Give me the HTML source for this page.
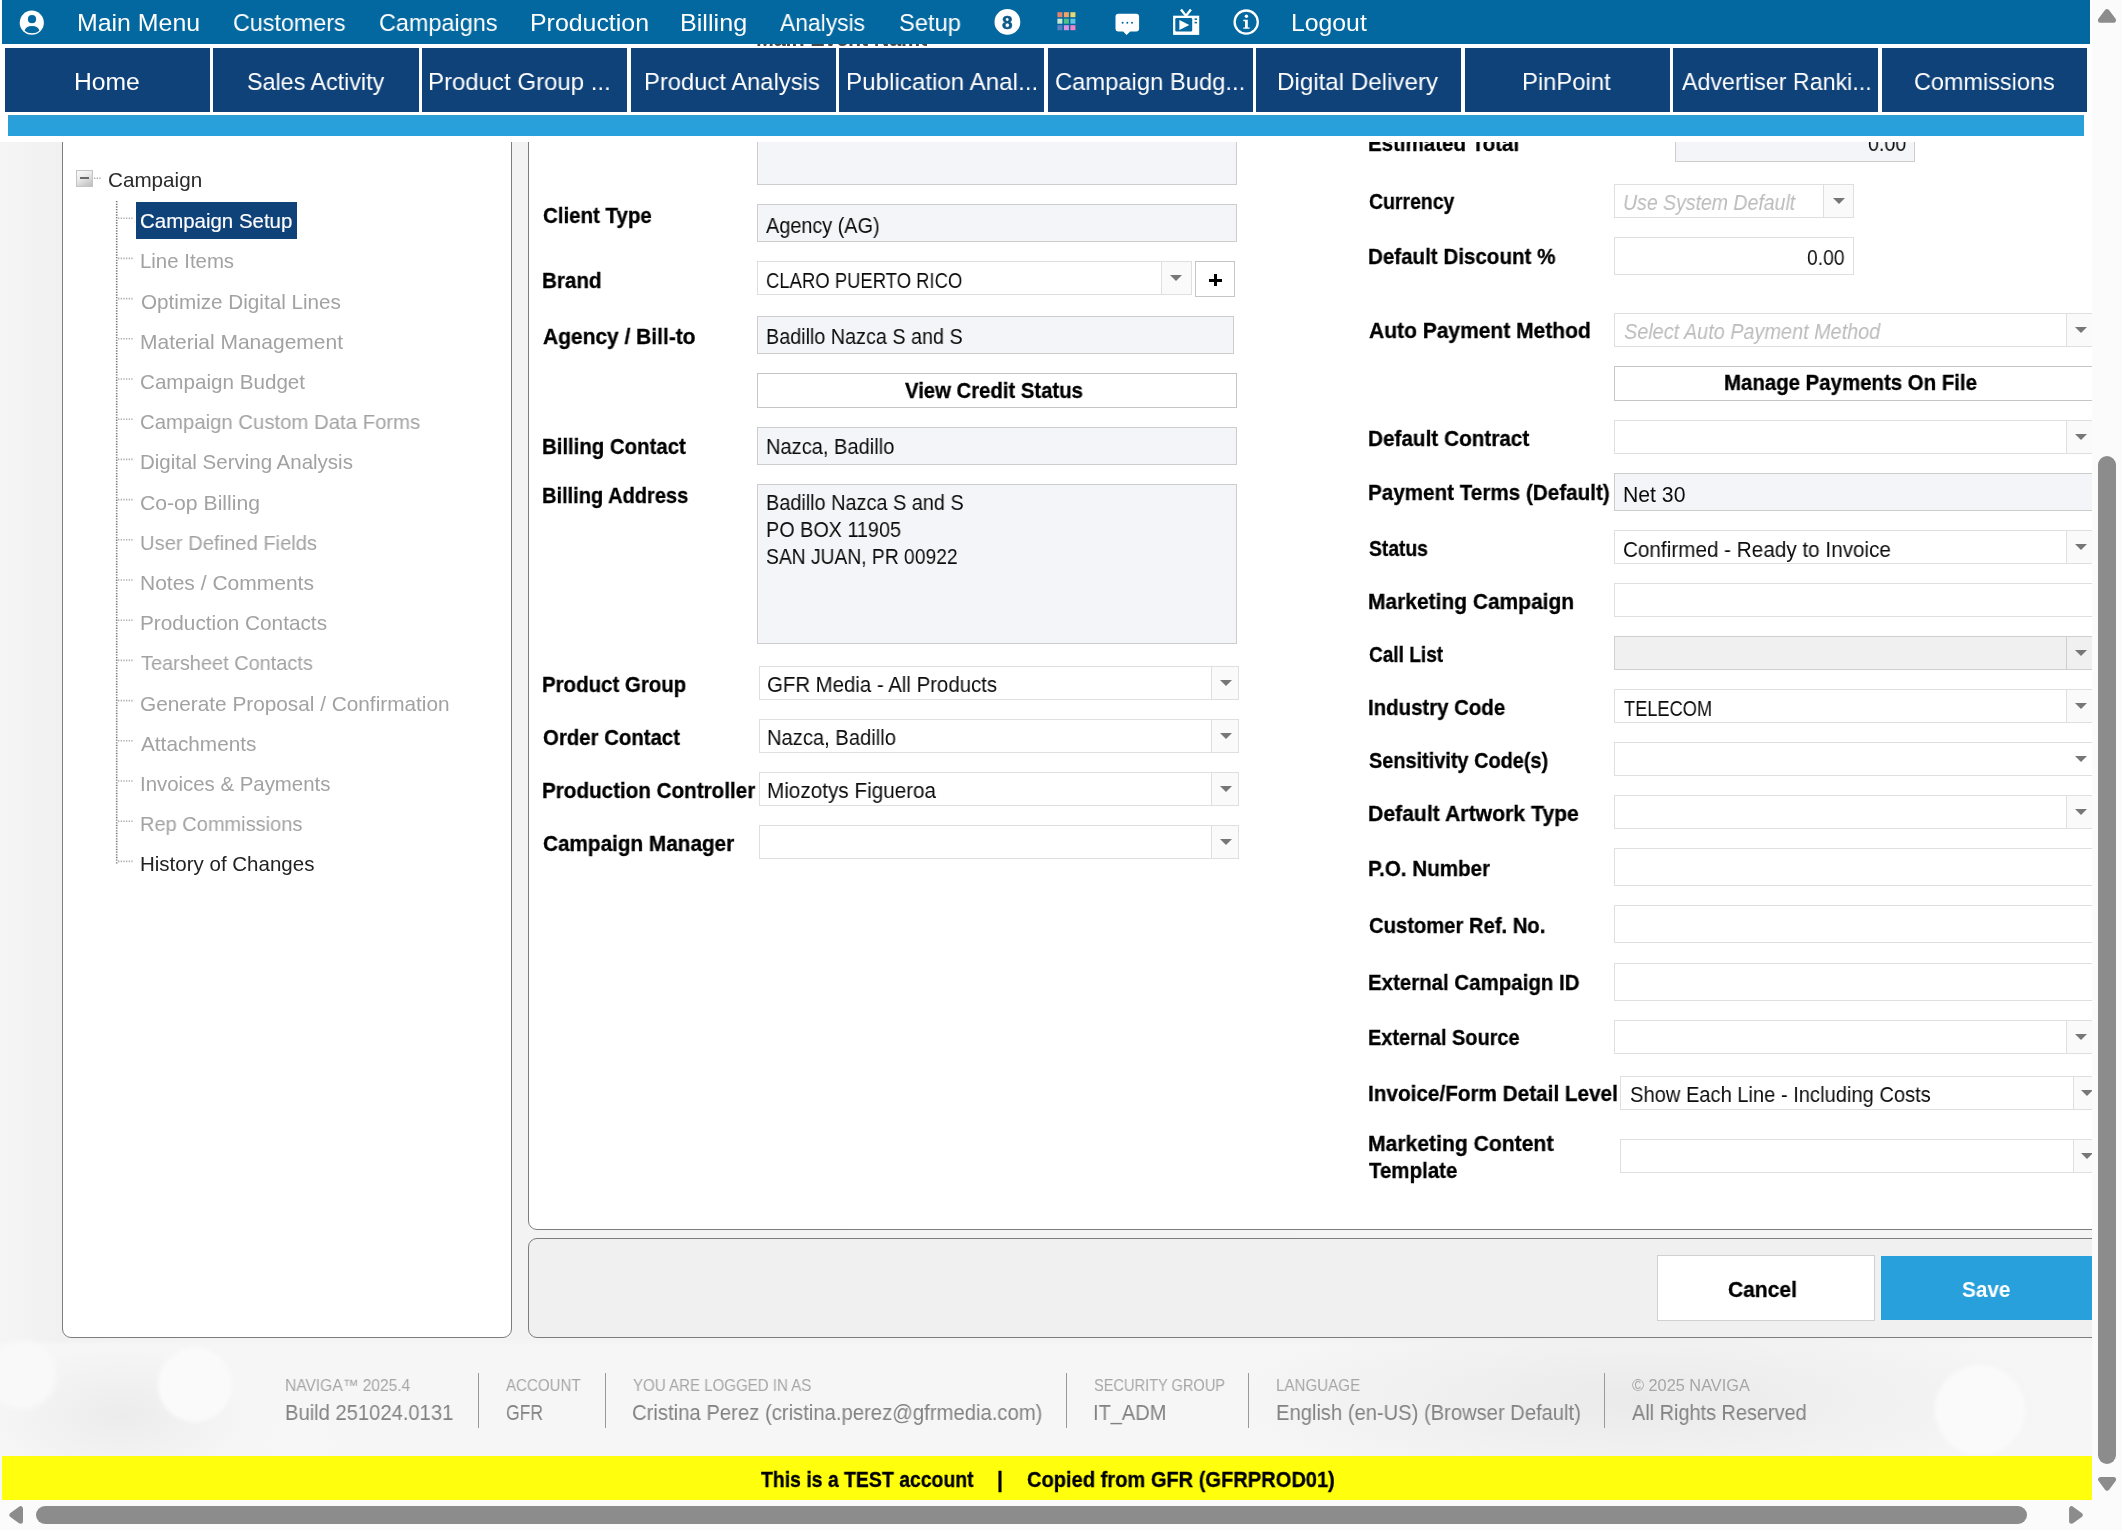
<!DOCTYPE html>
<html lang="en"><head><meta charset="utf-8"><title>Campaign Setup</title><style>
html,body{margin:0;padding:0}body{width:2122px;height:1530px;overflow:hidden;position:relative;background:#f3f3f3;font-family:"Liberation Sans", sans-serif}
.a{position:absolute;box-sizing:border-box}.t{position:absolute;white-space:nowrap;line-height:1;will-change:transform}
</style></head><body>
<div class="a" style="left:0;top:0;width:2122px;height:1530px;background:radial-gradient(circle at 195px 1385px,#fafafa 0 34px,rgba(250,250,250,0) 40px),radial-gradient(circle at 1980px 1410px,#fafafa 0 42px,rgba(250,250,250,0) 48px),radial-gradient(circle at 22px 1375px,#f9f9f9 0 30px,rgba(249,249,249,0) 38px),radial-gradient(circle at 300px 1445px,#f7f7f7 0 24px,rgba(247,247,247,0) 40px),radial-gradient(ellipse 130px 70px at 120px 1415px,#ececec 0,rgba(236,236,236,0) 100%),radial-gradient(ellipse 420px 95px at 1640px 1400px,#eaeaea 0,rgba(234,234,234,0) 100%),linear-gradient(180deg,rgba(246,246,246,0) 1340px,#f6f6f6 1345px),linear-gradient(90deg,#f5f5f5,#f1f1f1 60px,#f3f3f3 200px,#f4f4f4)"></div>
<div class="a" style="left:62px;top:100px;width:450px;height:1238px;background:#fff;border:1px solid #7d7d7d;border-radius:0 0 9px 9px;"></div>
<div class="a" style="left:528px;top:100px;width:1672px;height:1129.5px;background:#fff;border:1px solid #7d7d7d;border-radius:0 0 0 9px;"></div>
<div class="a" style="left:528px;top:1238px;width:1672px;height:99.5px;background:#f0f0f0;border:1px solid #7d7d7d;border-radius:9px 0 0 9px;"></div>
<div class="a" style="left:76px;top:170px;width:17px;height:17px;background:linear-gradient(150deg,#fafafa 0%,#ebebeb 40%,#cfcfcf 75%,#bdbdbd 100%);border:1px solid #c4c4c4;"></div>
<div class="a" style="left:80px;top:177px;width:9px;height:2px;background:#6a6a6a;"></div>
<div class="a" style="left:136px;top:202.2px;width:161px;height:36.5px;background:#10427a;"></div>
<svg class="a" style="left:0;top:0" width="520" height="900" viewBox="0 0 520 900"><line x1="116.7" y1="201" x2="116.7" y2="864" stroke="#7c7c7c" stroke-width="1.6" stroke-dasharray="1.333 1.333"/><line x1="94" y1="178.3" x2="101.5" y2="178.3" stroke="#aaa" stroke-width="1.6" stroke-dasharray="1.333 1.333"/><line x1="118" y1="218.2" x2="133" y2="218.2" stroke="#b0b0b0" stroke-width="1.6" stroke-dasharray="1.333 1.333"/><line x1="118" y1="258.4" x2="133" y2="258.4" stroke="#b0b0b0" stroke-width="1.6" stroke-dasharray="1.333 1.333"/><line x1="118" y1="298.6" x2="133" y2="298.6" stroke="#b0b0b0" stroke-width="1.6" stroke-dasharray="1.333 1.333"/><line x1="118" y1="338.8" x2="133" y2="338.8" stroke="#b0b0b0" stroke-width="1.6" stroke-dasharray="1.333 1.333"/><line x1="118" y1="379.0" x2="133" y2="379.0" stroke="#b0b0b0" stroke-width="1.6" stroke-dasharray="1.333 1.333"/><line x1="118" y1="419.2" x2="133" y2="419.2" stroke="#b0b0b0" stroke-width="1.6" stroke-dasharray="1.333 1.333"/><line x1="118" y1="459.4" x2="133" y2="459.4" stroke="#b0b0b0" stroke-width="1.6" stroke-dasharray="1.333 1.333"/><line x1="118" y1="499.6" x2="133" y2="499.6" stroke="#b0b0b0" stroke-width="1.6" stroke-dasharray="1.333 1.333"/><line x1="118" y1="539.8" x2="133" y2="539.8" stroke="#b0b0b0" stroke-width="1.6" stroke-dasharray="1.333 1.333"/><line x1="118" y1="580.0" x2="133" y2="580.0" stroke="#b0b0b0" stroke-width="1.6" stroke-dasharray="1.333 1.333"/><line x1="118" y1="620.2" x2="133" y2="620.2" stroke="#b0b0b0" stroke-width="1.6" stroke-dasharray="1.333 1.333"/><line x1="118" y1="660.4" x2="133" y2="660.4" stroke="#b0b0b0" stroke-width="1.6" stroke-dasharray="1.333 1.333"/><line x1="118" y1="700.6" x2="133" y2="700.6" stroke="#b0b0b0" stroke-width="1.6" stroke-dasharray="1.333 1.333"/><line x1="118" y1="740.8" x2="133" y2="740.8" stroke="#b0b0b0" stroke-width="1.6" stroke-dasharray="1.333 1.333"/><line x1="118" y1="781.0" x2="133" y2="781.0" stroke="#b0b0b0" stroke-width="1.6" stroke-dasharray="1.333 1.333"/><line x1="118" y1="821.2" x2="133" y2="821.2" stroke="#b0b0b0" stroke-width="1.6" stroke-dasharray="1.333 1.333"/><line x1="118" y1="861.4" x2="133" y2="861.4" stroke="#b0b0b0" stroke-width="1.6" stroke-dasharray="1.333 1.333"/></svg>
<div class="a" style="left:757px;top:100px;width:480px;height:85px;background:#f4f5f8;border:1px solid #cdcdcd;"></div>
<div class="a" style="left:757px;top:204px;width:480px;height:38px;background:#f4f5f8;border:1px solid #cdcdcd;"></div>
<div class="a" style="left:757px;top:261px;width:435px;height:34px;background:#fff;border:1px solid #dfdfdf;"></div>
<div class="a" style="left:1161px;top:261px;width:31px;height:34px;background:#fafafa;border:1px solid #dfdfdf;"></div>
<div class="a" style="left:1170.0px;top:274.9px;width:0;height:0;border-left:6.0px solid transparent;border-right:6.0px solid transparent;border-top:6.6px solid #777;"></div>
<div class="a" style="left:1195px;top:261px;width:40px;height:36px;background:#fff;border:1px solid #c6c6c6;"></div>
<div class="a" style="left:1209px;top:278.5px;width:12.5px;height:3.0px;background:#000;"></div>
<div class="a" style="left:1213.8px;top:273.8px;width:3.0px;height:12.5px;background:#000;"></div>
<div class="a" style="left:757px;top:316px;width:477px;height:38px;background:#f4f5f8;border:1px solid #cdcdcd;"></div>
<div class="a" style="left:757px;top:373px;width:480px;height:35px;background:#fff;border:1px solid #c6c6c6;"></div>
<div class="a" style="left:757px;top:427px;width:480px;height:38px;background:#f4f5f8;border:1px solid #cdcdcd;"></div>
<div class="a" style="left:757px;top:484px;width:480px;height:160px;background:#f4f5f8;border:1px solid #cdcdcd;"></div>
<div class="a" style="left:759px;top:666px;width:480px;height:34px;background:#fff;border:1px solid #dfdfdf;"></div>
<div class="a" style="left:1211px;top:666px;width:28px;height:34px;background:#fafafa;border:1px solid #dfdfdf;"></div>
<div class="a" style="left:1219.7px;top:679.8000000000001px;width:0;height:0;border-left:6.0px solid transparent;border-right:6.0px solid transparent;border-top:6.6px solid #777;"></div>
<div class="a" style="left:759px;top:719px;width:480px;height:34px;background:#fff;border:1px solid #dfdfdf;"></div>
<div class="a" style="left:1211px;top:719px;width:28px;height:34px;background:#fafafa;border:1px solid #dfdfdf;"></div>
<div class="a" style="left:1219.7px;top:732.8000000000001px;width:0;height:0;border-left:6.0px solid transparent;border-right:6.0px solid transparent;border-top:6.6px solid #777;"></div>
<div class="a" style="left:759px;top:772px;width:480px;height:34px;background:#fff;border:1px solid #dfdfdf;"></div>
<div class="a" style="left:1211px;top:772px;width:28px;height:34px;background:#fafafa;border:1px solid #dfdfdf;"></div>
<div class="a" style="left:1219.7px;top:785.8000000000001px;width:0;height:0;border-left:6.0px solid transparent;border-right:6.0px solid transparent;border-top:6.6px solid #777;"></div>
<div class="a" style="left:759px;top:825px;width:480px;height:34px;background:#fff;border:1px solid #dfdfdf;"></div>
<div class="a" style="left:1211px;top:825px;width:28px;height:34px;background:#fafafa;border:1px solid #dfdfdf;"></div>
<div class="a" style="left:1219.7px;top:838.8000000000001px;width:0;height:0;border-left:6.0px solid transparent;border-right:6.0px solid transparent;border-top:6.6px solid #777;"></div>
<div class="a" style="left:1675px;top:100px;width:240px;height:62px;background:#f4f5f8;border:1px solid #cdcdcd;"></div>
<div class="a" style="left:1614px;top:184px;width:240px;height:34px;background:#fff;border:1px solid #dfdfdf;"></div>
<div class="a" style="left:1823px;top:184px;width:31px;height:34px;background:#fafafa;border:1px solid #dfdfdf;"></div>
<div class="a" style="left:1833.2px;top:197.79999999999998px;width:0;height:0;border-left:6.0px solid transparent;border-right:6.0px solid transparent;border-top:6.6px solid #777;"></div>
<div class="a" style="left:1614px;top:237px;width:240px;height:38px;background:#fff;border:1px solid #dfdfdf;"></div>
<div class="a" style="left:1614px;top:313px;width:480px;height:34px;background:#fff;border:1px solid #dfdfdf;"></div>
<div class="a" style="left:2066px;top:313px;width:28px;height:34px;background:#fafafa;border:1px solid #dfdfdf;"></div>
<div class="a" style="left:2074.7px;top:326.8px;width:0;height:0;border-left:6.0px solid transparent;border-right:6.0px solid transparent;border-top:6.6px solid #777;"></div>
<div class="a" style="left:1614px;top:366px;width:480px;height:35px;background:#fff;border:1px solid #c6c6c6;"></div>
<div class="a" style="left:1614px;top:420px;width:480px;height:34px;background:#fff;border:1px solid #dfdfdf;"></div>
<div class="a" style="left:2066px;top:420px;width:28px;height:34px;background:#fafafa;border:1px solid #dfdfdf;"></div>
<div class="a" style="left:2074.7px;top:433.8px;width:0;height:0;border-left:6.0px solid transparent;border-right:6.0px solid transparent;border-top:6.6px solid #777;"></div>
<div class="a" style="left:1614px;top:473px;width:480px;height:38px;background:#f4f5f8;border:1px solid #cdcdcd;"></div>
<div class="a" style="left:1614px;top:530px;width:480px;height:34px;background:#fff;border:1px solid #dfdfdf;"></div>
<div class="a" style="left:2066px;top:530px;width:28px;height:34px;background:#fafafa;border:1px solid #dfdfdf;"></div>
<div class="a" style="left:2074.7px;top:543.8000000000001px;width:0;height:0;border-left:6.0px solid transparent;border-right:6.0px solid transparent;border-top:6.6px solid #777;"></div>
<div class="a" style="left:1614px;top:583px;width:480px;height:34px;background:#fff;border:1px solid #dfdfdf;"></div>
<div class="a" style="left:1614px;top:636px;width:480px;height:34px;background:#f0f0f0;border:1px solid #cfcfcf;"></div>
<div class="a" style="left:2066px;top:636px;width:28px;height:34px;background:#f0f0f0;border:1px solid #cfcfcf;"></div>
<div class="a" style="left:2074.7px;top:649.8000000000001px;width:0;height:0;border-left:6.0px solid transparent;border-right:6.0px solid transparent;border-top:6.6px solid #777;"></div>
<div class="a" style="left:1614px;top:689px;width:480px;height:34px;background:#fff;border:1px solid #dfdfdf;"></div>
<div class="a" style="left:2066px;top:689px;width:28px;height:34px;background:#fafafa;border:1px solid #dfdfdf;"></div>
<div class="a" style="left:2074.7px;top:702.8000000000001px;width:0;height:0;border-left:6.0px solid transparent;border-right:6.0px solid transparent;border-top:6.6px solid #777;"></div>
<div class="a" style="left:1614px;top:742px;width:480px;height:34px;background:#fff;border:1px solid #dfdfdf;"></div>
<div class="a" style="left:2074.7px;top:755.8000000000001px;width:0;height:0;border-left:6.0px solid transparent;border-right:6.0px solid transparent;border-top:6.6px solid #777;"></div>
<div class="a" style="left:1614px;top:795px;width:480px;height:34px;background:#fff;border:1px solid #dfdfdf;"></div>
<div class="a" style="left:2066px;top:795px;width:28px;height:34px;background:#fafafa;border:1px solid #dfdfdf;"></div>
<div class="a" style="left:2074.7px;top:808.8000000000001px;width:0;height:0;border-left:6.0px solid transparent;border-right:6.0px solid transparent;border-top:6.6px solid #777;"></div>
<div class="a" style="left:1614px;top:848px;width:480px;height:38px;background:#fff;border:1px solid #dfdfdf;"></div>
<div class="a" style="left:1614px;top:905px;width:480px;height:38px;background:#fff;border:1px solid #dfdfdf;"></div>
<div class="a" style="left:1614px;top:963px;width:480px;height:38px;background:#fff;border:1px solid #dfdfdf;"></div>
<div class="a" style="left:1614px;top:1020px;width:480px;height:34px;background:#fff;border:1px solid #dfdfdf;"></div>
<div class="a" style="left:2066px;top:1020px;width:28px;height:34px;background:#fafafa;border:1px solid #dfdfdf;"></div>
<div class="a" style="left:2074.7px;top:1033.8px;width:0;height:0;border-left:6.0px solid transparent;border-right:6.0px solid transparent;border-top:6.6px solid #777;"></div>
<div class="a" style="left:1620px;top:1076px;width:480px;height:34px;background:#fff;border:1px solid #dfdfdf;"></div>
<div class="a" style="left:2073px;top:1076px;width:27px;height:34px;background:#fafafa;border:1px solid #dfdfdf;"></div>
<div class="a" style="left:2081.2px;top:1089.8px;width:0;height:0;border-left:6.0px solid transparent;border-right:6.0px solid transparent;border-top:6.6px solid #777;"></div>
<div class="a" style="left:1620px;top:1139px;width:480px;height:34px;background:#fff;border:1px solid #dfdfdf;"></div>
<div class="a" style="left:2073px;top:1139px;width:27px;height:34px;background:#fafafa;border:1px solid #dfdfdf;"></div>
<div class="a" style="left:2081.2px;top:1152.8px;width:0;height:0;border-left:6.0px solid transparent;border-right:6.0px solid transparent;border-top:6.6px solid #777;"></div>
<div class="a" style="left:1657px;top:1255px;width:218px;height:66px;background:#fff;border:1px solid #d0d0d0;"></div>
<div class="a" style="left:1881px;top:1256px;width:319px;height:64px;background:#27a0db;"></div>
<div class="a" style="left:477.9px;top:1373px;width:1.2000000000000455px;height:54.5px;background:#9a9a9a;"></div>
<div class="a" style="left:604.8px;top:1373px;width:1.2000000000000455px;height:54.5px;background:#9a9a9a;"></div>
<div class="a" style="left:1065.6000000000001px;top:1373px;width:1.199999999999818px;height:54.5px;background:#9a9a9a;"></div>
<div class="a" style="left:1248.0px;top:1373px;width:1.199999999999818px;height:54.5px;background:#9a9a9a;"></div>
<div class="a" style="left:1603.7px;top:1373px;width:1.199999999999818px;height:54.5px;background:#9a9a9a;"></div>
<div class="a" style="left:0px;top:0px;width:2092px;height:142px;background:#fff;z-index:20;"></div>
<div class="a" style="left:2px;top:0px;width:2088px;height:44px;background:#03689f;z-index:20;"></div>
<div class="a" style="left:756px;top:44px;width:171px;height:2px;overflow:hidden;z-index:21;will-change:transform"><span style="position:absolute;left:0;top:-16px;font-weight:bold;font-size:21.6px;line-height:1;color:#4a4a4a;white-space:nowrap;letter-spacing:-0.2px">Main Event Name</span></div>
<div class="a" style="left:4.8px;top:48px;width:205.29999999999998px;height:63.7px;background:#10427a;z-index:20;"></div>
<div class="a" style="left:213.4px;top:48px;width:205.29999999999998px;height:63.7px;background:#10427a;z-index:20;"></div>
<div class="a" style="left:421.9px;top:48px;width:205.30000000000007px;height:63.7px;background:#10427a;z-index:20;"></div>
<div class="a" style="left:630.5px;top:48px;width:205.29999999999995px;height:63.7px;background:#10427a;z-index:20;"></div>
<div class="a" style="left:839.0px;top:48px;width:205.29999999999995px;height:63.7px;background:#10427a;z-index:20;"></div>
<div class="a" style="left:1047.5px;top:48px;width:205.29999999999995px;height:63.7px;background:#10427a;z-index:20;"></div>
<div class="a" style="left:1256.1px;top:48px;width:205.30000000000018px;height:63.7px;background:#10427a;z-index:20;"></div>
<div class="a" style="left:1464.7px;top:48px;width:205.29999999999995px;height:63.7px;background:#10427a;z-index:20;"></div>
<div class="a" style="left:1673.2px;top:48px;width:205.29999999999995px;height:63.7px;background:#10427a;z-index:20;"></div>
<div class="a" style="left:1881.8px;top:48px;width:205.29999999999995px;height:63.7px;background:#10427a;z-index:20;"></div>
<div class="a" style="left:8px;top:115px;width:2076px;height:21px;background:linear-gradient(180deg,#3a9cc8 0,#2aa0da 2px,#27a0db 100%);z-index:20;"></div>
<div class="a" style="left:2px;top:1456px;width:2090px;height:44px;background:#ffff0d;z-index:20;"></div>
<div class="a" style="left:2092px;top:0px;width:30px;height:1530px;background:#fbfbfb;z-index:22;"></div>
<div class="a" style="left:0px;top:1500px;width:2122px;height:30px;background:#fbfbfb;z-index:22;"></div>
<div class="a" style="left:2098px;top:456px;width:18px;height:1008px;background:#8c8c8c;border-radius:9px;z-index:23;"></div>
<div class="a" style="left:36px;top:1506px;width:1991px;height:18px;background:#8c8c8c;border-radius:9px;z-index:23;"></div>
<span class="t" id="t0" style="left:107.5px;top:170.0px;font-size:20.4px;color:#2a2a2a;transform:scaleX(1.0130);transform-origin:0 0;">Campaign</span>
<span class="t" id="t1" style="left:140.0px;top:211.0px;font-size:20.4px;color:#fff;-webkit-text-stroke:0.15px #fff;transform:scaleX(1.0029);transform-origin:0 0;">Campaign Setup</span>
<span class="t" id="t2" style="left:140.0px;top:251.0px;font-size:20.4px;color:#a2a2a2;transform:scaleX(0.9959);transform-origin:0 0;">Line Items</span>
<span class="t" id="t3" style="left:141.0px;top:292.0px;font-size:20.4px;color:#a2a2a2;transform:scaleX(1.0137);transform-origin:0 0;">Optimize Digital Lines</span>
<span class="t" id="t4" style="left:140.0px;top:332.0px;font-size:20.4px;color:#a2a2a2;transform:scaleX(1.0292);transform-origin:0 0;">Material Management</span>
<span class="t" id="t5" style="left:140.0px;top:372.0px;font-size:20.4px;color:#a2a2a2;transform:scaleX(1.0112);transform-origin:0 0;">Campaign Budget</span>
<span class="t" id="t6" style="left:140.0px;top:412.0px;font-size:20.4px;color:#a2a2a2;transform:scaleX(0.9974);transform-origin:0 0;">Campaign Custom Data Forms</span>
<span class="t" id="t7" style="left:140.0px;top:452.0px;font-size:20.4px;color:#a2a2a2;transform:scaleX(1.0045);transform-origin:0 0;">Digital Serving Analysis</span>
<span class="t" id="t8" style="left:140.0px;top:493.0px;font-size:20.4px;color:#a2a2a2;transform:scaleX(1.0379);transform-origin:0 0;">Co-op Billing</span>
<span class="t" id="t9" style="left:140.0px;top:533.0px;font-size:20.4px;color:#a2a2a2;transform:scaleX(0.9889);transform-origin:0 0;">User Defined Fields</span>
<span class="t" id="t10" style="left:140.0px;top:573.0px;font-size:20.4px;color:#a2a2a2;transform:scaleX(1.0301);transform-origin:0 0;">Notes / Comments</span>
<span class="t" id="t11" style="left:140.0px;top:613.0px;font-size:20.4px;color:#a2a2a2;transform:scaleX(1.0185);transform-origin:0 0;">Production Contacts</span>
<span class="t" id="t12" style="left:141.0px;top:653.0px;font-size:20.4px;color:#a2a2a2;transform:scaleX(0.9784);transform-origin:0 0;">Tearsheet Contacts</span>
<span class="t" id="t13" style="left:140.0px;top:694.0px;font-size:20.4px;color:#a2a2a2;transform:scaleX(1.0191);transform-origin:0 0;">Generate Proposal / Confirmation</span>
<span class="t" id="t14" style="left:141.0px;top:734.0px;font-size:20.4px;color:#a2a2a2;transform:scaleX(1.0181);transform-origin:0 0;">Attachments</span>
<span class="t" id="t15" style="left:140.0px;top:774.0px;font-size:20.4px;color:#a2a2a2;transform:scaleX(0.9999);transform-origin:0 0;">Invoices &amp; Payments</span>
<span class="t" id="t16" style="left:140.0px;top:814.0px;font-size:20.4px;color:#a2a2a2;transform:scaleX(0.9815);transform-origin:0 0;">Rep Commissions</span>
<span class="t" id="t17" style="left:140.0px;top:854.0px;font-size:20.4px;color:#222;transform:scaleX(1.0057);transform-origin:0 0;">History of Changes</span>
<span class="t" id="t18" style="left:543.3px;top:206.0px;font-size:21.4px;color:#000;font-weight:bold;-webkit-text-stroke:0.3px #000;transform:scaleX(0.9569);transform-origin:0 0;">Client Type</span>
<span class="t" id="t19" style="left:766.4px;top:215.0px;font-size:21.2px;color:#0c0c0c;transform:scaleX(0.9366);transform-origin:0 0;">Agency (AG)</span>
<span class="t" id="t20" style="left:542.3px;top:271.0px;font-size:21.4px;color:#000;font-weight:bold;-webkit-text-stroke:0.3px #000;transform:scaleX(0.9624);transform-origin:0 0;">Brand</span>
<span class="t" id="t21" style="left:765.5px;top:270.0px;font-size:21.2px;color:#0c0c0c;transform:scaleX(0.8714);transform-origin:0 0;">CLARO PUERTO RICO</span>
<span class="t" id="t22" style="left:543.3px;top:327.0px;font-size:21.4px;color:#000;font-weight:bold;-webkit-text-stroke:0.3px #000;transform:scaleX(0.9798);transform-origin:0 0;">Agency / Bill-to</span>
<span class="t" id="t23" style="left:766.1px;top:326.0px;font-size:21.2px;color:#0c0c0c;transform:scaleX(0.9328);transform-origin:0 0;">Badillo Nazca S and S</span>
<span class="t" id="t24" style="left:905.0px;top:381.0px;font-size:21.4px;color:#000;font-weight:bold;-webkit-text-stroke:0.3px #000;transform:scaleX(0.9492);transform-origin:0 0;">View Credit Status</span>
<span class="t" id="t25" style="left:542.3px;top:437.0px;font-size:21.4px;color:#000;font-weight:bold;-webkit-text-stroke:0.3px #000;transform:scaleX(0.9526);transform-origin:0 0;">Billing Contact</span>
<span class="t" id="t26" style="left:766.1px;top:436.0px;font-size:21.2px;color:#0c0c0c;transform:scaleX(0.9472);transform-origin:0 0;">Nazca, Badillo</span>
<span class="t" id="t27" style="left:542.4px;top:486.0px;font-size:21.4px;color:#000;font-weight:bold;-webkit-text-stroke:0.3px #000;transform:scaleX(0.9368);transform-origin:0 0;">Billing Address</span>
<span class="t" id="t28" style="left:765.5px;top:492.0px;font-size:21.2px;color:#0c0c0c;transform:scaleX(0.9375);transform-origin:0 0;">Badillo Nazca S and S</span>
<span class="t" id="t29" style="left:765.5px;top:519.0px;font-size:21.2px;color:#0c0c0c;transform:scaleX(0.9341);transform-origin:0 0;">PO BOX 11905</span>
<span class="t" id="t30" style="left:766.4px;top:546.0px;font-size:21.2px;color:#0c0c0c;transform:scaleX(0.9090);transform-origin:0 0;">SAN JUAN, PR 00922</span>
<span class="t" id="t31" style="left:542.3px;top:675.0px;font-size:21.4px;color:#000;font-weight:bold;-webkit-text-stroke:0.3px #000;transform:scaleX(0.9556);transform-origin:0 0;">Product Group</span>
<span class="t" id="t32" style="left:767.2px;top:674.0px;font-size:21.2px;color:#0c0c0c;transform:scaleX(0.9624);transform-origin:0 0;">GFR Media - All Products</span>
<span class="t" id="t33" style="left:543.3px;top:728.0px;font-size:21.4px;color:#000;font-weight:bold;-webkit-text-stroke:0.3px #000;transform:scaleX(0.9521);transform-origin:0 0;">Order Contact</span>
<span class="t" id="t34" style="left:767.2px;top:727.0px;font-size:21.2px;color:#0c0c0c;transform:scaleX(0.9517);transform-origin:0 0;">Nazca, Badillo</span>
<span class="t" id="t35" style="left:542.3px;top:781.0px;font-size:21.4px;color:#000;font-weight:bold;-webkit-text-stroke:0.3px #000;transform:scaleX(0.9649);transform-origin:0 0;">Production Controller</span>
<span class="t" id="t36" style="left:767.2px;top:780.0px;font-size:21.2px;color:#0c0c0c;transform:scaleX(0.9766);transform-origin:0 0;">Miozotys Figueroa</span>
<span class="t" id="t37" style="left:543.3px;top:834.0px;font-size:21.4px;color:#000;font-weight:bold;-webkit-text-stroke:0.3px #000;transform:scaleX(0.9691);transform-origin:0 0;">Campaign Manager</span>
<span class="t" id="t38" style="left:1367.8px;top:134.0px;font-size:21.4px;color:#000;font-weight:bold;-webkit-text-stroke:0.3px #000;transform:scaleX(0.9580);transform-origin:0 0;">Estimated Total</span>
<span class="t" id="t39" style="left:1867.5px;top:133.0px;font-size:21.2px;color:#0c0c0c;transform:scaleX(0.9267);transform-origin:0 0;">0.00</span>
<span class="t" id="t40" style="left:1368.8px;top:192.0px;font-size:21.4px;color:#000;font-weight:bold;-webkit-text-stroke:0.3px #000;transform:scaleX(0.9083);transform-origin:0 0;">Currency</span>
<span class="t" id="t41" style="left:1622.7px;top:192.0px;font-size:21.2px;color:#bcbcbc;font-style:italic;transform:scaleX(0.9197);transform-origin:0 0;">Use System Default</span>
<span class="t" id="t42" style="left:1367.8px;top:247.0px;font-size:21.4px;color:#000;font-weight:bold;-webkit-text-stroke:0.3px #000;transform:scaleX(0.9613);transform-origin:0 0;">Default Discount %</span>
<span class="t" id="t43" style="left:1807.3px;top:247.0px;font-size:21.2px;color:#0c0c0c;transform:scaleX(0.9094);transform-origin:0 0;">0.00</span>
<span class="t" id="t44" style="left:1368.8px;top:321.0px;font-size:21.4px;color:#000;font-weight:bold;-webkit-text-stroke:0.3px #000;transform:scaleX(0.9821);transform-origin:0 0;">Auto Payment Method</span>
<span class="t" id="t45" style="left:1623.6px;top:321.0px;font-size:21.2px;color:#bcbcbc;font-style:italic;transform:scaleX(0.9365);transform-origin:0 0;">Select Auto Payment Method</span>
<span class="t" id="t46" style="left:1723.7px;top:373.0px;font-size:21.4px;color:#000;font-weight:bold;-webkit-text-stroke:0.3px #000;transform:scaleX(0.9542);transform-origin:0 0;">Manage Payments On File</span>
<span class="t" id="t47" style="left:1367.8px;top:429.0px;font-size:21.4px;color:#000;font-weight:bold;-webkit-text-stroke:0.3px #000;transform:scaleX(0.9693);transform-origin:0 0;">Default Contract</span>
<span class="t" id="t48" style="left:1367.8px;top:483.0px;font-size:21.4px;color:#000;font-weight:bold;-webkit-text-stroke:0.3px #000;transform:scaleX(0.9651);transform-origin:0 0;">Payment Terms (Default)</span>
<span class="t" id="t49" style="left:1623.3px;top:484.0px;font-size:21.2px;color:#0c0c0c;transform:scaleX(0.9942);transform-origin:0 0;">Net 30</span>
<span class="t" id="t50" style="left:1368.8px;top:539.0px;font-size:21.4px;color:#000;font-weight:bold;-webkit-text-stroke:0.3px #000;transform:scaleX(0.8995);transform-origin:0 0;">Status</span>
<span class="t" id="t51" style="left:1622.6px;top:539.0px;font-size:21.2px;color:#0c0c0c;transform:scaleX(0.9765);transform-origin:0 0;">Confirmed - Ready to Invoice</span>
<span class="t" id="t52" style="left:1367.8px;top:592.0px;font-size:21.4px;color:#000;font-weight:bold;-webkit-text-stroke:0.3px #000;transform:scaleX(0.9797);transform-origin:0 0;">Marketing Campaign</span>
<span class="t" id="t53" style="left:1368.8px;top:645.0px;font-size:21.4px;color:#000;font-weight:bold;-webkit-text-stroke:0.3px #000;transform:scaleX(0.8907);transform-origin:0 0;">Call List</span>
<span class="t" id="t54" style="left:1367.8px;top:698.0px;font-size:21.4px;color:#000;font-weight:bold;-webkit-text-stroke:0.3px #000;transform:scaleX(0.9537);transform-origin:0 0;">Industry Code</span>
<span class="t" id="t55" style="left:1624.0px;top:698.0px;font-size:21.2px;color:#0c0c0c;transform:scaleX(0.8604);transform-origin:0 0;">TELECOM</span>
<span class="t" id="t56" style="left:1368.8px;top:751.0px;font-size:21.4px;color:#000;font-weight:bold;-webkit-text-stroke:0.3px #000;transform:scaleX(0.9302);transform-origin:0 0;">Sensitivity Code(s)</span>
<span class="t" id="t57" style="left:1367.8px;top:804.0px;font-size:21.4px;color:#000;font-weight:bold;-webkit-text-stroke:0.3px #000;transform:scaleX(0.9913);transform-origin:0 0;">Default Artwork Type</span>
<span class="t" id="t58" style="left:1367.8px;top:859.0px;font-size:21.4px;color:#000;font-weight:bold;-webkit-text-stroke:0.3px #000;transform:scaleX(0.9628);transform-origin:0 0;">P.O. Number</span>
<span class="t" id="t59" style="left:1368.8px;top:916.0px;font-size:21.4px;color:#000;font-weight:bold;-webkit-text-stroke:0.3px #000;transform:scaleX(0.9448);transform-origin:0 0;">Customer Ref. No.</span>
<span class="t" id="t60" style="left:1367.8px;top:973.0px;font-size:21.4px;color:#000;font-weight:bold;-webkit-text-stroke:0.3px #000;transform:scaleX(0.9561);transform-origin:0 0;">External Campaign ID</span>
<span class="t" id="t61" style="left:1367.9px;top:1028.0px;font-size:21.4px;color:#000;font-weight:bold;-webkit-text-stroke:0.3px #000;transform:scaleX(0.9304);transform-origin:0 0;">External Source</span>
<span class="t" id="t62" style="left:1367.8px;top:1084.0px;font-size:21.4px;color:#000;font-weight:bold;-webkit-text-stroke:0.3px #000;transform:scaleX(0.9687);transform-origin:0 0;">Invoice/Form Detail Level</span>
<span class="t" id="t63" style="left:1630.2px;top:1084.0px;font-size:21.2px;color:#0c0c0c;transform:scaleX(0.9493);transform-origin:0 0;">Show Each Line - Including Costs</span>
<span class="t" id="t64" style="left:1367.8px;top:1134.0px;font-size:21.4px;color:#000;font-weight:bold;-webkit-text-stroke:0.3px #000;transform:scaleX(0.9869);transform-origin:0 0;">Marketing Content</span>
<span class="t" id="t65" style="left:1368.8px;top:1161.0px;font-size:21.4px;color:#000;font-weight:bold;-webkit-text-stroke:0.3px #000;transform:scaleX(0.9564);transform-origin:0 0;">Template</span>
<span class="t" id="t66" style="left:1728.0px;top:1279.0px;font-size:21.6px;color:#000;font-weight:bold;-webkit-text-stroke:0.3px #000;transform:scaleX(0.9740);transform-origin:0 0;">Cancel</span>
<span class="t" id="t67" style="left:1961.7px;top:1279.0px;font-size:21.6px;color:#fff;font-weight:bold;transform:scaleX(0.9578);transform-origin:0 0;">Save</span>
<span class="t" id="t68" style="left:284.7px;top:1377.0px;font-size:16.2px;color:#a6a6a6;transform:scaleX(0.9615);transform-origin:0 0;">NAVIGA™ 2025.4</span>
<span class="t" id="t69" style="left:284.7px;top:1402.0px;font-size:21.2px;color:#828282;transform:scaleX(0.9523);transform-origin:0 0;">Build 251024.0131</span>
<span class="t" id="t70" style="left:506.3px;top:1377.0px;font-size:16.2px;color:#a6a6a6;transform:scaleX(0.9319);transform-origin:0 0;">ACCOUNT</span>
<span class="t" id="t71" style="left:505.5px;top:1402.0px;font-size:21.2px;color:#828282;transform:scaleX(0.8266);transform-origin:0 0;">GFR</span>
<span class="t" id="t72" style="left:633.0px;top:1377.0px;font-size:16.2px;color:#a6a6a6;transform:scaleX(0.9306);transform-origin:0 0;">YOU ARE LOGGED IN AS</span>
<span class="t" id="t73" style="left:632.0px;top:1402.0px;font-size:21.2px;color:#828282;transform:scaleX(0.9568);transform-origin:0 0;">Cristina Perez (cristina.perez@gfrmedia.com)</span>
<span class="t" id="t74" style="left:1093.9px;top:1377.0px;font-size:16.2px;color:#a6a6a6;transform:scaleX(0.9010);transform-origin:0 0;">SECURITY GROUP</span>
<span class="t" id="t75" style="left:1093.0px;top:1402.0px;font-size:21.2px;color:#828282;transform:scaleX(0.9447);transform-origin:0 0;">IT_ADM</span>
<span class="t" id="t76" style="left:1275.8px;top:1377.0px;font-size:16.2px;color:#a6a6a6;transform:scaleX(0.9353);transform-origin:0 0;">LANGUAGE</span>
<span class="t" id="t77" style="left:1275.7px;top:1402.0px;font-size:21.2px;color:#828282;transform:scaleX(0.9519);transform-origin:0 0;">English (en-US) (Browser Default)</span>
<span class="t" id="t78" style="left:1632.2px;top:1377.0px;font-size:16.2px;color:#a6a6a6;transform:scaleX(1.0076);transform-origin:0 0;">© 2025 NAVIGA</span>
<span class="t" id="t79" style="left:1632.2px;top:1402.0px;font-size:21.2px;color:#828282;transform:scaleX(0.9386);transform-origin:0 0;">All Rights Reserved</span>
<span class="t" id="t80" style="left:77.0px;top:11.0px;font-size:24.3px;color:#fff;transform:scaleX(1.0241);transform-origin:0 0;z-index:21;">Main Menu</span>
<span class="t" id="t81" style="left:232.5px;top:11.0px;font-size:24.3px;color:#fff;transform:scaleX(0.9586);transform-origin:0 0;z-index:21;">Customers</span>
<span class="t" id="t82" style="left:378.6px;top:11.0px;font-size:24.3px;color:#fff;transform:scaleX(0.9642);transform-origin:0 0;z-index:21;">Campaigns</span>
<span class="t" id="t83" style="left:530.0px;top:11.0px;font-size:24.3px;color:#fff;transform:scaleX(1.0243);transform-origin:0 0;z-index:21;">Production</span>
<span class="t" id="t84" style="left:680.2px;top:11.0px;font-size:24.3px;color:#fff;transform:scaleX(1.0356);transform-origin:0 0;z-index:21;">Billing</span>
<span class="t" id="t85" style="left:780.2px;top:11.0px;font-size:24.3px;color:#fff;transform:scaleX(0.9398);transform-origin:0 0;z-index:21;">Analysis</span>
<span class="t" id="t86" style="left:898.6px;top:11.0px;font-size:24.3px;color:#fff;transform:scaleX(0.9744);transform-origin:0 0;z-index:21;">Setup</span>
<span class="t" id="t87" style="left:1291.0px;top:11.0px;font-size:24.3px;color:#fff;transform:scaleX(1.0196);transform-origin:0 0;z-index:21;">Logout</span>
<span class="t" id="t88" style="left:73.7px;top:70.0px;font-size:24.3px;color:#fff;transform:scaleX(1.0161);transform-origin:0 0;z-index:21;">Home</span>
<span class="t" id="t89" style="left:246.5px;top:70.0px;font-size:24.3px;color:#fff;transform:scaleX(0.9588);transform-origin:0 0;z-index:21;">Sales Activity</span>
<span class="t" id="t90" style="left:428.0px;top:70.0px;font-size:24.3px;color:#fff;transform:scaleX(0.9875);transform-origin:0 0;z-index:21;">Product Group ...</span>
<span class="t" id="t91" style="left:644.0px;top:70.0px;font-size:24.3px;color:#fff;transform:scaleX(0.9787);transform-origin:0 0;z-index:21;">Product Analysis</span>
<span class="t" id="t92" style="left:845.6px;top:70.0px;font-size:24.3px;color:#fff;transform:scaleX(0.9947);transform-origin:0 0;z-index:21;">Publication Anal...</span>
<span class="t" id="t93" style="left:1054.5px;top:70.0px;font-size:24.3px;color:#fff;transform:scaleX(0.9778);transform-origin:0 0;z-index:21;">Campaign Budg...</span>
<span class="t" id="t94" style="left:1277.0px;top:70.0px;font-size:24.3px;color:#fff;transform:scaleX(0.9945);transform-origin:0 0;z-index:21;">Digital Delivery</span>
<span class="t" id="t95" style="left:1522.0px;top:70.0px;font-size:24.3px;color:#fff;transform:scaleX(0.9803);transform-origin:0 0;z-index:21;">PinPoint</span>
<span class="t" id="t96" style="left:1682.0px;top:70.0px;font-size:24.3px;color:#fff;transform:scaleX(0.9555);transform-origin:0 0;z-index:21;">Advertiser Ranki...</span>
<span class="t" id="t97" style="left:1914.0px;top:70.0px;font-size:24.3px;color:#fff;transform:scaleX(0.9643);transform-origin:0 0;z-index:21;">Commissions</span>
<span class="t" id="t98" style="left:761.0px;top:1470.0px;font-size:21.4px;color:#000;font-weight:bold;-webkit-text-stroke:0.3px #000;transform:scaleX(0.9079);transform-origin:0 0;z-index:21;">This is a TEST account</span>
<span class="t" id="t99" style="left:996.5px;top:1470.0px;font-size:21.4px;color:#000;font-weight:bold;-webkit-text-stroke:0.3px #000;z-index:21;">|</span>
<span class="t" id="t100" style="left:1026.6px;top:1470.0px;font-size:21.4px;color:#000;font-weight:bold;-webkit-text-stroke:0.3px #000;transform:scaleX(0.9385);transform-origin:0 0;z-index:21;">Copied from GFR (GFRPROD01)</span>
<svg class="a" style="left:0;top:0;z-index:30" width="1300" height="48" viewBox="0 0 1300 48">
<!-- user -->
<circle cx="31.8" cy="22.7" r="12.1" fill="#fff"/>
<circle cx="32" cy="19.2" r="4.1" fill="#03689f"/>
<path d="M24.6 30.8 Q25.6 26 32 26 Q38.4 26 39.4 30.8 Q36.4 33.3 32 33.3 Q27.6 33.3 24.6 30.8Z" fill="#03689f"/>
<!-- 8 -->
<circle cx="1007.4" cy="21.9" r="12.9" fill="#fff"/>
<text x="1007.4" y="28.6" text-anchor="middle" font-family="Liberation Sans, sans-serif" font-weight="bold" font-size="19" fill="#0b5a8a" stroke="#0b5a8a" stroke-width="0.5" style="font-weight:bold">8</text>
<!-- grid -->
<g>
<rect x="1057.4" y="12.2" width="5" height="5" fill="#e5826c"/><rect x="1063.9" y="12.2" width="5" height="5" fill="#efa465"/><rect x="1070.4" y="12.2" width="5" height="5" fill="#e6d873"/>
<rect x="1057.4" y="18.7" width="5" height="5" fill="#c9e9cf"/><rect x="1063.9" y="18.7" width="5" height="5" fill="#4fc088"/><rect x="1070.4" y="18.7" width="5" height="5" fill="#5fc3e4"/>
<rect x="1057.4" y="25.2" width="5" height="5" fill="#5b80c4"/><rect x="1063.9" y="25.2" width="5" height="5" fill="#dc93e2"/><rect x="1070.4" y="25.2" width="5" height="5" fill="#f083c4"/>
</g>
<!-- chat -->
<path d="M1118.4 13.8 H1136.2 Q1139.1 13.8 1139.1 16.7 V28.5 Q1139.1 31.4 1136.2 31.4 H1130.2 L1126.6 35 L1123.2 31.4 H1118.4 Q1115.5 31.4 1115.5 28.5 V16.7 Q1115.5 13.8 1118.4 13.8Z" fill="#fff"/>
<circle cx="1122.6" cy="22.8" r="1" fill="#03689f"/><circle cx="1127.3" cy="22.8" r="1" fill="#03689f"/><circle cx="1132" cy="22.8" r="1" fill="#03689f"/>
<!-- tv -->
<path d="M1181 9.6 L1186 15.9 L1190.9 9.6" stroke="#fff" stroke-width="2.4" fill="none"/>
<rect x="1173.1" y="15.7" width="26.1" height="19.2" fill="#fff"/>
<rect x="1175.3" y="18" width="16.9" height="13.6" rx="1.3" fill="#03689f"/>
<path d="M1179.4 20 L1189.3 25 L1179.4 30Z" fill="#fff"/>
<rect x="1194.6" y="18.4" width="2.3" height="1.6" fill="#03689f"/><rect x="1194.6" y="21.8" width="2.3" height="1.6" fill="#03689f"/>
<!-- info -->
<circle cx="1246.2" cy="22.1" r="11.6" fill="none" stroke="#fff" stroke-width="2.3"/>
<circle cx="1246.4" cy="16.2" r="1.7" fill="#fff"/>
<path d="M1243.3 19.8 H1247.8 V27.4 H1249.6 V28.8 H1243.3 V27.4 H1245 V21.2 H1243.3Z" fill="#fff"/>
</svg>
<svg class="a" style="left:2092px;top:0;z-index:40" width="30" height="1530" viewBox="0 0 30 1530">
<path d="M15 11.6 L21.6 20.3 H8.4Z" fill="#8c8c8c" stroke="#8c8c8c" stroke-width="5" stroke-linejoin="round"/>
<path d="M8.6 1479.6 H21.6 L15.1 1488.2Z" fill="#8c8c8c" stroke="#8c8c8c" stroke-width="5" stroke-linejoin="round"/>
</svg>
<svg class="a" style="left:0;top:1500px;z-index:40" width="2122" height="30" viewBox="0 0 2122 30">
<path d="M11.9 15 L20.5 8.7 V21.3Z" fill="#8c8c8c" stroke="#8c8c8c" stroke-width="5" stroke-linejoin="round"/>
<path d="M2080.2 15 L2071.6 8.7 V21.3Z" fill="#8c8c8c" stroke="#8c8c8c" stroke-width="5" stroke-linejoin="round"/>
</svg>

</body></html>
